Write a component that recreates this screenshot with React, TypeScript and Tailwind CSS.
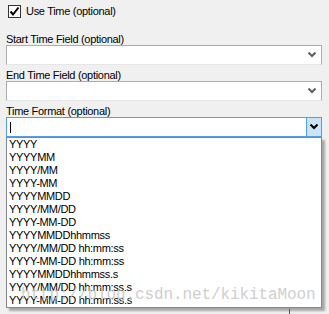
const formats = [
  'YYYY',
  'YYYYMM',
  'YYYY/MM',
  'YYYY-MM',
  'YYYYMMDD',
  'YYYY/MM/DD',
  'YYYY-MM-DD',
  'YYYYMMDDhhmmss',
  'YYYY/MM/DD hh:mm:ss',
  'YYYY-MM-DD hh:mm:ss',
  'YYYYMMDDhhmmss.s',
  'YYYY/MM/DD hh:mm:ss.s',
  'YYYY-MM-DD hh:mm:ss.s',
];

function Chevron({ color }: { color: string }) {
  return (
    <svg width="8" height="6" viewBox="0 0 8 6">
      <path d="M0.5 0.5 L4 4 L7.5 0.5" fill="none" stroke={color} strokeWidth="2" />
    </svg>
  );
}

function ComboBox() {
  return (
    <div className="h-[20px] flex items-center justify-end bg-white border border-[#adadad] border-b-[#e6e6e6] pr-[5px]">
      <Chevron color="#606060" />
    </div>
  );
}

export default function App() {
  return (
    <div
      className="relative w-[329px] h-[314px] overflow-hidden bg-[#f0f0f0] pl-[6px] pr-[7px] text-[11px] tracking-[-0.3px] text-black"
      style={{ fontFamily: '"Liberation Sans", Arial, sans-serif' }}
    >
      <div className="flex items-center gap-[5px] pl-[2px] pt-[5px] h-[18px]">
        <div className="w-[13px] h-[13px] bg-white border border-[#333333] flex items-center justify-center">
          <svg width="11" height="11" viewBox="0 0 11 11">
            <path d="M1.5 5.5 L4 8.5 L9.5 1.5" fill="none" stroke="#000" strokeWidth="2" />
          </svg>
        </div>
        <span className="leading-[13px]">Use Time (optional)</span>
      </div>

      <div className="mt-[15px] h-[12px] leading-[12px]">Start Time Field (optional)</div>
      <ComboBox />

      <div className="mt-[4px] h-[12px] leading-[12px]">End Time Field (optional)</div>
      <ComboBox />

      <div className="mt-[4px] h-[12px] leading-[12px]">Time Format (optional)</div>
      <div className="h-[20px] flex bg-white border border-[#569de5]">
        <div className="flex-1 flex items-center pl-[3px]">
          <div className="w-px h-[11px] bg-black" />
        </div>
        <div className="w-[15px] flex items-center justify-center bg-[#cce4f7] border-l border-[#569de5]">
          <Chevron color="#000" />
        </div>
      </div>

      <div className="bg-white border border-[#828790] shadow-[3px_3px_2px_rgba(0,0,0,0.3)]">
        {formats.map((f) => (
          <div key={f} className="h-[13px] leading-[13px] pl-[2px] whitespace-nowrap">
            {f}
          </div>
        ))}
      </div>

      <div className="absolute left-[289px] top-[309px] w-px h-[5px] bg-[#555555]" />

      <div
        className="absolute left-[21px] top-[287px] text-[16px] leading-[16px] tracking-[-0.1px] text-[#c4c4c4] opacity-80 whitespace-nowrap pointer-events-none"
        style={{ fontFamily: '"Liberation Mono", "Courier New", monospace' }}
      >
        http://blog.csdn.net/kikitaMoon
      </div>
    </div>
  );
}
